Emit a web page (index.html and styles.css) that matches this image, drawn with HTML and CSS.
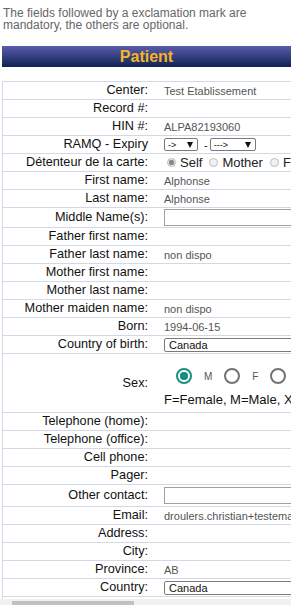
FILE: index.html
```html
<!DOCTYPE html>
<html lang="en">
<head>
    <meta charset="UTF-8">
    <meta name="viewport" content="width=device-width, initial-scale=1.0">
    <title>Patient</title>
    <link rel="stylesheet" href="styles.css">
</head>
<body>
    <p class="intro">The fields followed by a exclamation mark are mandatory, the others are optional.</p>

    <div class="section-title">Patient</div>

    <table class="patient-form">
        <tr><td class="label">Center:</td><td class="value">Test Etablissement</td></tr>
        <tr><td class="label">Record #:</td><td class="value"></td></tr>
        <tr><td class="label">HIN #:</td><td class="value">ALPA82193060</td></tr>
        <tr>
            <td class="label">RAMQ - Expiry</td>
            <td class="value">
                <span class="pick pick-month"><span>-&gt;</span><span class="arrow"></span></span><span class="dash">-</span><span class="pick pick-year"><span>---&gt;</span><span class="arrow"></span></span>
            </td>
        </tr>
        <tr>
            <td class="label">Détenteur de la carte:</td>
            <td class="value">
                <div class="holder">
                    <span class="mini-radio checked"></span><span class="holder-text">Self</span>
                    <span class="mini-radio"></span><span class="holder-text">Mother</span>
                    <span class="mini-radio"></span><span class="holder-text">Father</span>
                </div>
            </td>
        </tr>
        <tr><td class="label">First name:</td><td class="value">Alphonse</td></tr>
        <tr><td class="label">Last name:</td><td class="value">Alphonse</td></tr>
        <tr class="field-row"><td class="label">Middle Name(s):</td><td class="value"><input type="text" class="text-field"></td></tr>
        <tr><td class="label">Father first name:</td><td class="value"></td></tr>
        <tr><td class="label">Father last name:</td><td class="value">non dispo</td></tr>
        <tr><td class="label">Mother first name:</td><td class="value"></td></tr>
        <tr><td class="label">Mother last name:</td><td class="value"></td></tr>
        <tr><td class="label">Mother maiden name:</td><td class="value">non dispo</td></tr>
        <tr><td class="label">Born:</td><td class="value">1994-06-15</td></tr>
        <tr><td class="label">Country of birth:</td><td class="value"><span class="pick pick-wide">Canada</span></td></tr>
        <tr class="sex-row">
            <td class="label">Sex:</td>
            <td class="value">
                <div class="sex-options">
                    <span class="md-radio checked"></span><span class="sex-letter">M</span>
                    <span class="md-radio"></span><span class="sex-letter">F</span>
                    <span class="md-radio"></span><span class="sex-letter">X</span>
                </div>
                <div class="sex-legend">F=Female, M=Male, X=Undetermined</div>
            </td>
        </tr>
        <tr><td class="label">Telephone (home):</td><td class="value"></td></tr>
        <tr><td class="label">Telephone (office):</td><td class="value"></td></tr>
        <tr><td class="label">Cell phone:</td><td class="value"></td></tr>
        <tr><td class="label">Pager:</td><td class="value"></td></tr>
        <tr class="field-row tall"><td class="label">Other contact:</td><td class="value"><input type="text" class="text-field"></td></tr>
        <tr><td class="label">Email:</td><td class="value">droulers.christian+testemail@gmail.com</td></tr>
        <tr><td class="label">Address:</td><td class="value"></td></tr>
        <tr><td class="label">City:</td><td class="value"></td></tr>
        <tr><td class="label">Province:</td><td class="value">AB</td></tr>
        <tr><td class="label">Country:</td><td class="value"><span class="pick pick-wide">Canada</span></td></tr>
        <tr><td class="label">Postal Code:</td><td class="value"></td></tr>
        <tr><td class="label">Language:</td><td class="value">English</td></tr>
    </table>

    <div class="hscroll"><div class="hscroll-thumb"></div></div>
</body>
</html>
```

FILE: styles.css
```css
html, body {
    overflow: hidden;
}

body {
    margin: 0;
    font-family: 'Liberation Sans', Arial, sans-serif;
    color: #111;
}

.intro {
    margin: 7px 3px 0;
    font-size: 12px;
    line-height: 12px;
    color: #666;
}

.section-title {
    margin: 15px 0 0 2px;
    height: 21px;
    line-height: 21px;
    text-align: center;
    font-size: 16px;
    font-weight: bold;
    color: #f5b523;
    background: linear-gradient(#5a5aad, #0e2453);
}

.patient-form {
    margin: 14px 0 0 2px;
    width: 560px;
    border-collapse: collapse;
    border-top: 1px solid #d3d8e9;
    border-left: 1px solid #d3d8e9;
}

.patient-form td {
    height: 17px;
    padding: 0;
    border-bottom: 1px solid #d3d8e9;
    vertical-align: middle;
    white-space: nowrap;
}

.patient-form td.label {
    width: 145px;
    padding-right: 7px;
    text-align: right;
    font-size: 12.7px;
    line-height: 17px;
    color: #111;
}

.patient-form td.value {
    padding-left: 9px;
    font-size: 11px;
    color: #555;
}

.field-row td.value {
    padding-top: 1px;
    padding-bottom: 1px;
}

.field-row.tall td.value {
    padding-top: 2px;
    padding-bottom: 2px;
}

.text-field {
    display: block;
    width: 220px;
    height: 17px;
    box-sizing: border-box;
    margin: 0;
    padding: 0 3px;
    border: 1px solid #a0a0a0;
    background: white;
}

/* faux selects */
.pick {
    display: inline-flex;
    align-items: center;
    justify-content: space-between;
    box-sizing: border-box;
    height: 13px;
    padding: 0 4px 0 3px;
    border: 1px solid #7a7a7a;
    border-radius: 2px;
    background: white;
    font-size: 9px;
    color: #111;
    vertical-align: middle;
}

.pick-month {
    width: 34px;
}

.pick-year {
    width: 46px;
}

.pick-wide {
    width: 220px;
    height: 14px;
    font-size: 11px;
    padding-left: 4px;
}

.arrow {
    width: 0;
    height: 0;
    border-left: 3px solid transparent;
    border-right: 3px solid transparent;
    border-top: 6px solid #111;
}

.dash {
    display: inline-block;
    margin: 0 2px 0 6px;
    font-size: 11px;
    color: #111;
    vertical-align: middle;
}

/* card holder radios */
.holder {
    display: flex;
    align-items: center;
    font-size: 13px;
    color: #222;
}

.mini-radio {
    width: 9px;
    height: 9px;
    box-sizing: border-box;
    margin: 0 4px 0 7px;
    border: 1px solid #bdbdbd;
    border-radius: 50%;
    background: #f0f0f0;
    flex-shrink: 0;
}

.mini-radio:first-child {
    margin-left: 3px;
}

.mini-radio.checked {
    background: radial-gradient(circle, #8a8a8a 0 2.5px, #e6e6e6 3px);
}

/* sex row */
.sex-row td.value {
    padding-top: 12px;
    padding-bottom: 4px;
}

.sex-options {
    display: flex;
    align-items: center;
    height: 20px;
    padding-left: 12px;
}

.md-radio {
    width: 16px;
    height: 16px;
    box-sizing: border-box;
    border: 2px solid #737373;
    border-radius: 50%;
    flex-shrink: 0;
}

.md-radio.checked {
    border-color: #1a8e7f;
    background: radial-gradient(circle, #1a8e7f 0 4px, transparent 4.5px);
}

.sex-letter {
    margin: 0 12px;
    font-size: 10px;
    color: #555;
}

.sex-legend {
    margin-top: 6px;
    font-size: 13px;
    line-height: 16px;
    color: #111;
}

.hscroll {
    position: fixed;
    left: 0;
    right: 0;
    bottom: 0;
    height: 6px;
    background: #f1f1f1;
}

.hscroll-thumb {
    position: absolute;
    left: 12px;
    top: 2px;
    width: 122px;
    height: 4px;
    background: #c1c1c1;
}
```
